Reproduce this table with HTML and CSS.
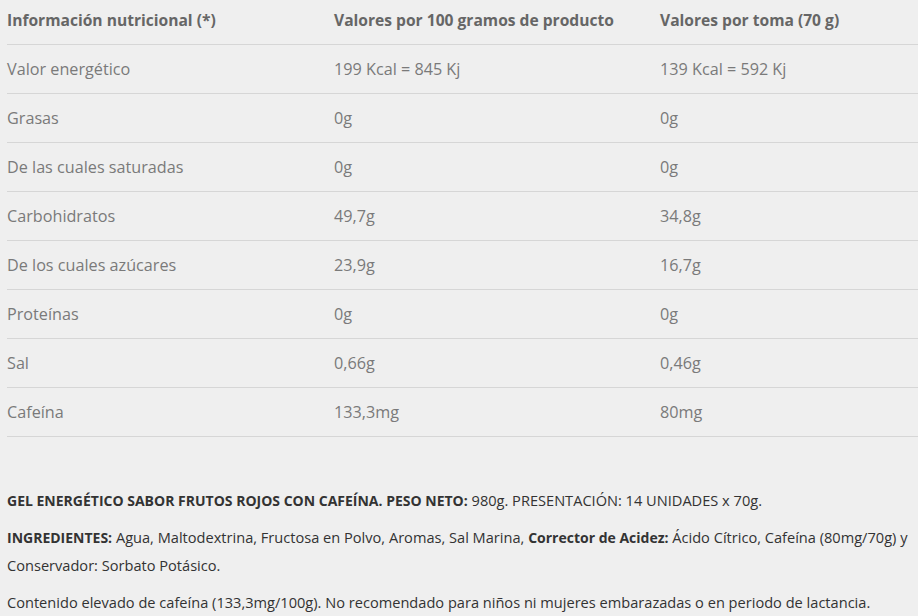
FILE: index.html
```html
<!DOCTYPE html>
<html lang="es">
<head>
<meta charset="utf-8">
<link rel="stylesheet" href="styles.css">
</head>
<body>
<div class="page">
  <table class="nutri">
    <colgroup><col class="c1"><col class="c2"><col class="c3"></colgroup>
    <thead>
      <tr><th>Información nutricional (*)</th><th>Valores por 100 gramos de producto</th><th>Valores por toma (70 g)</th></tr>
    </thead>
    <tbody>
      <tr><td>Valor energético</td><td>199 Kcal = 845 Kj</td><td>139 Kcal = 592 Kj</td></tr>
      <tr><td>Grasas</td><td>0g</td><td>0g</td></tr>
      <tr><td>De las cuales saturadas</td><td>0g</td><td>0g</td></tr>
      <tr><td>Carbohidratos</td><td>49,7g</td><td>34,8g</td></tr>
      <tr><td>De los cuales azúcares</td><td>23,9g</td><td>16,7g</td></tr>
      <tr><td>Proteínas</td><td>0g</td><td>0g</td></tr>
      <tr><td>Sal</td><td>0,66g</td><td>0,46g</td></tr>
      <tr><td>Cafeína</td><td>133,3mg</td><td>80mg</td></tr>
    </tbody>
  </table>
  <div class="info">
    <p><strong>GEL ENERGÉTICO SABOR FRUTOS ROJOS CON CAFEÍNA. PESO NETO:</strong> 980g. PRESENTACIÓN: 14 UNIDADES x 70g.</p>
    <p><strong>INGREDIENTES:</strong> Agua, Maltodextrina, Fructosa en Polvo, Aromas, Sal Marina, <strong>Corrector de Acidez:</strong> Ácido Cítrico, Cafeína (80mg/70g) y Conservador: Sorbato Potásico.</p>
    <p>Contenido elevado de cafeína (133,3mg/100g). No recomendado para niños ni mujeres embarazadas o en periodo de lactancia.</p>
  </div>
</div>
</body>
</html>
```
FILE: styles.css
```css
html, body {
  margin: 0;
  padding: 0;
  background: #efefef;
}
body {
  font-family: "Open Sans", "Noto Sans", sans-serif;
  overflow: hidden;
}
.page {
  padding-left: 7px;
  width: 911px;
}
.nutri {
  border-collapse: collapse;
  width: 911px;
  table-layout: fixed;
}
.c1 { width: 327px; }
.c2 { width: 326px; }
.c3 { width: 258px; }
.nutri th, .nutri td {
  box-sizing: border-box;
  text-align: left;
  padding: 0;
  border-bottom: 1px solid #d6d6d6;
  vertical-align: middle;
  white-space: nowrap;
}
.nutri th {
  height: 44px;
  padding-bottom: 4px;
  font-size: 15.6px;
  font-weight: 700;
  color: #666;
}
.nutri td {
  height: 49px;
  font-size: 16.2px;
  font-weight: 400;
  color: #7a7a7a;
}
.info {
  padding-top: 49px;
  padding-right: 6px;
  color: #333;
  font-size: 14.6px;
  line-height: 28px;
}
.info p {
  margin: 0 0 9px 0;
}
.info strong {
  font-weight: 700;
  font-size: 14px;
  line-height: 1;
}
```
